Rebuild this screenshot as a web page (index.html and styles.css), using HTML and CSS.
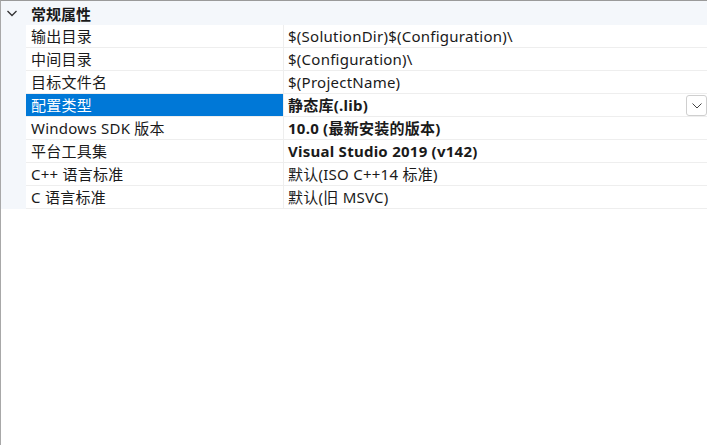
FILE: index.html
```html
<!DOCTYPE html>
<html lang="zh">
<head>
<meta charset="utf-8">
<link rel="stylesheet" href="styles.css">
</head>
<body>
<div class="grid">
  <div class="header">
    <span class="chev"><svg width="12" height="12" viewBox="0 0 12 12"><path d="M1.5 4 L6 8.5 L10.5 4" fill="none" stroke="#333" stroke-width="1.3"/></svg></span>
    <span class="htitle">常规属性</span>
  </div>
  <div class="rows">
    <div class="row"><div class="gut"></div><div class="name">输出目录</div><div class="val">$(SolutionDir)$(Configuration)\</div></div>
    <div class="row"><div class="gut"></div><div class="name">中间目录</div><div class="val">$(Configuration)\</div></div>
    <div class="row"><div class="gut"></div><div class="name">目标文件名</div><div class="val">$(ProjectName)</div></div>
    <div class="row sel"><div class="gut"></div><div class="name">配置类型</div><div class="val b">静态库(.lib)<span class="drop"><svg width="10" height="6" viewBox="0 0 10 6"><path d="M0.5 0.5 L5 5 L9.5 0.5" fill="none" stroke="#444" stroke-width="1"/></svg></span></div></div>
    <div class="row"><div class="gut"></div><div class="name">Windows SDK 版本</div><div class="val b">10.0 (最新安装的版本)</div></div>
    <div class="row"><div class="gut"></div><div class="name">平台工具集</div><div class="val b">Visual Studio 2019 (v142)</div></div>
    <div class="row"><div class="gut"></div><div class="name">C++ 语言标准</div><div class="val">默认(ISO C++14 标准)</div></div>
    <div class="row"><div class="gut"></div><div class="name">C 语言标准</div><div class="val">默认(旧 MSVC)</div></div>
  </div>
</div>
</body>
</html>
```
FILE: styles.css
```css
html, body {
  margin: 0;
  padding: 0;
  background: #ffffff;
}
body {
  width: 707px;
  height: 446px;
  overflow: hidden;
  font-family: "Noto Sans", "Noto Sans CJK SC", sans-serif;
  font-size: 15px;
  letter-spacing: 0.25px;
  color: #1a1a1a;
}
.grid {
  height: 445px;
  border-top: 1px solid #9a9a9a;
  border-left: 1px solid #a8a8a8;
  box-sizing: border-box;
}
.header {
  height: 24px;
  background: #f4f7fb;
  display: flex;
  align-items: center;
}
.chev {
  width: 30px;
  display: flex;
  justify-content: center;
  box-sizing: border-box;
  margin-left: -4px;
}
.htitle {
  font-weight: bold;
  font-family: "Noto Sans CJK SC", sans-serif;
  font-size: 15px;
  letter-spacing: 0;
  padding-left: 4px;
}
.row {
  display: flex;
  height: 23px;
}
.gut {
  width: 25px;
  background: #f4f7fb;
  flex: none;
}
.name, .val {
  box-sizing: border-box;
  height: 23px;
  line-height: 22px;
  border-bottom: 1px solid #eeeeee;
  white-space: nowrap;
}
.name {
  width: 258px;
  padding-left: 5px;
  border-right: 1px solid #eeeeee;
}
.val {
  flex: 1;
  padding-left: 4px;
  position: relative;
}
.b {
  font-weight: bold;
}
.sel .name {
  background: #0078d7;
  color: #ffffff;
}
.drop {
  position: absolute;
  right: 0;
  top: 1px;
  width: 21px;
  height: 21px;
  box-sizing: border-box;
  border: 1px solid #cfcfcf;
  border-radius: 3px;
  background: #fff;
  display: flex;
  align-items: center;
  justify-content: center;
}
```
